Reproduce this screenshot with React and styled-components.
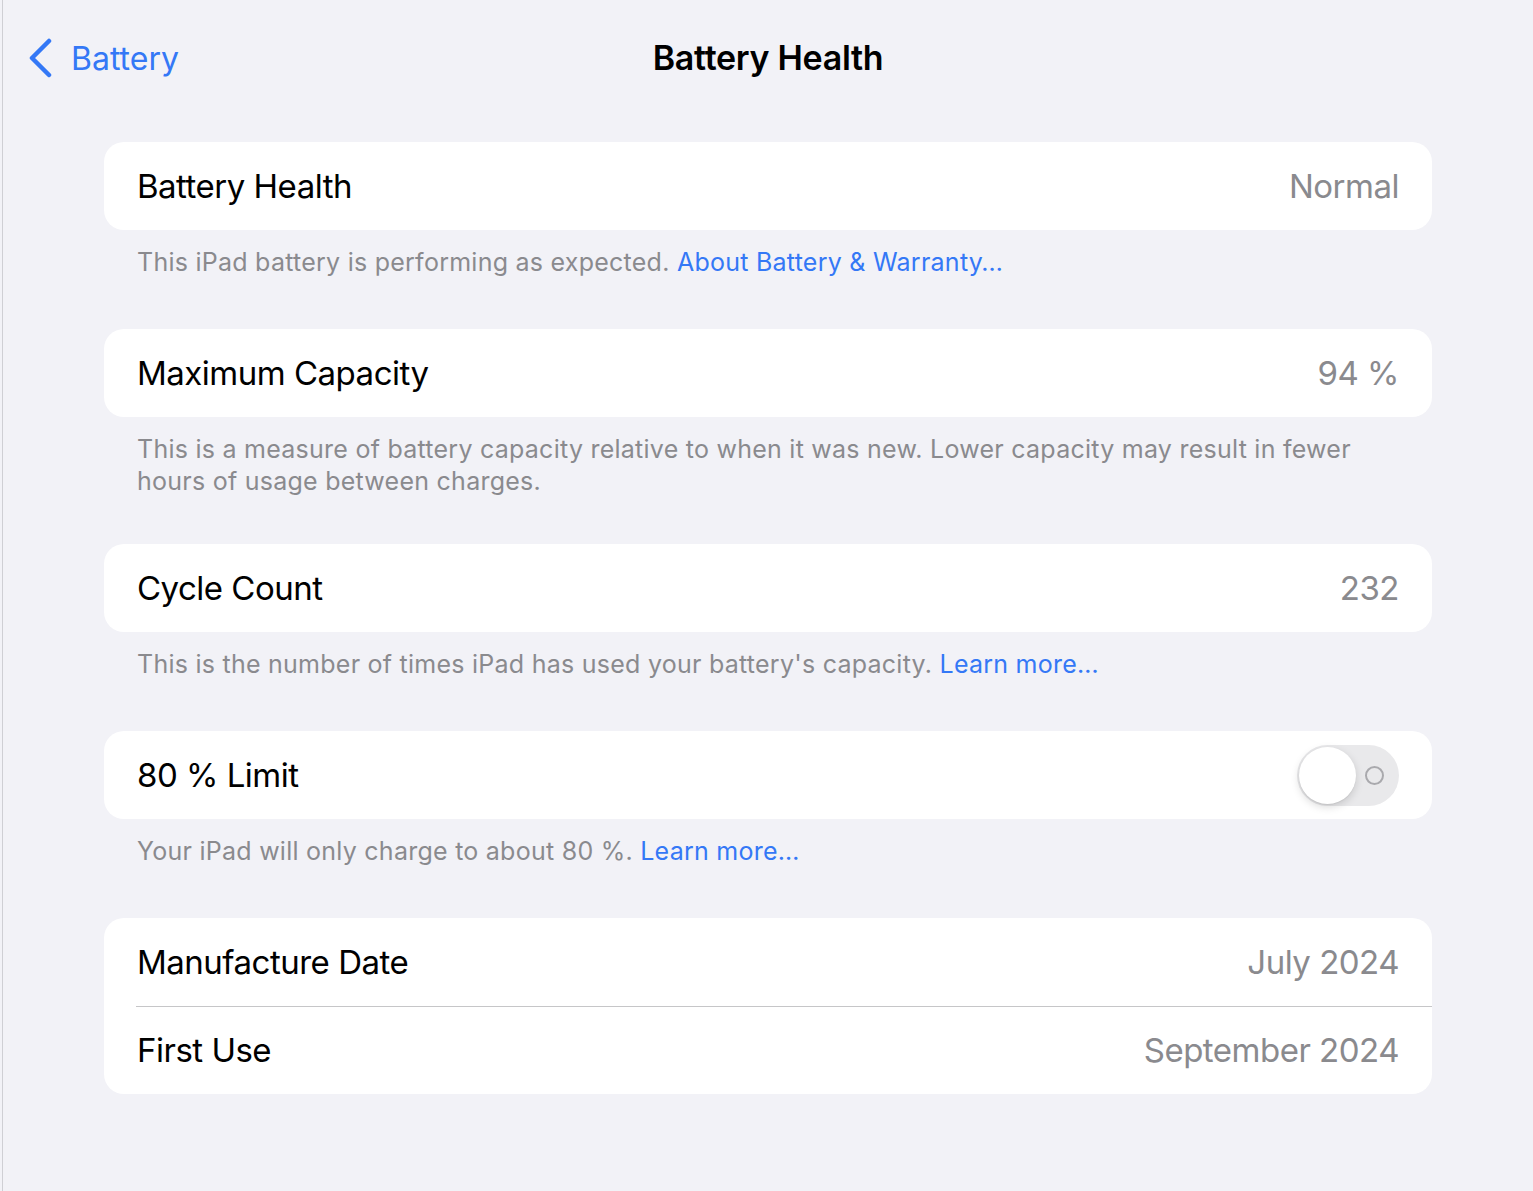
import React, { useState } from "react";
import styled, { createGlobalStyle } from "styled-components";

const GlobalStyle = createGlobalStyle`
  html, body {
    margin: 0;
    padding: 0;
    background: #f2f2f7;
  }
  body {
    font-family: Inter, "Noto Sans", "Liberation Sans", sans-serif;
    -webkit-font-smoothing: antialiased;
  }
`;

const Page = styled.div`
  min-height: 1191px;
  margin-left: 2px;
  border-left: 1px solid #cfcfd4;
  background: #f2f2f7;
  box-sizing: border-box;
`;

const NavBar = styled.div`
  position: relative;
  display: flex;
  align-items: center;
  justify-content: center;
  height: 115px;
`;

const BackButton = styled.div`
  position: absolute;
  left: 21px;
  top: 38px;
  display: flex;
  align-items: center;
  gap: 17px;
  color: #3478f6;
  font-size: 32px;
`;

const Title = styled.div`
  font-size: 34px;
  font-weight: 600;
  color: #000;
  letter-spacing: -0.3px;
`;

const Content = styled.div`
  padding: 27px 101px 0 101px;
`;

const Card = styled.div`
  background: #fff;
  border-radius: 20px;
  overflow: hidden;
`;

const Row = styled.div`
  position: relative;
  display: flex;
  align-items: center;
  justify-content: space-between;
  height: 88px;
  padding: 0 33px;
  font-size: 33px;
  letter-spacing: -0.5px;

  & + &::before {
    content: "";
    position: absolute;
    top: 0;
    left: 32px;
    right: 0;
    height: 1px;
    background: #c6c6c8;
  }
`;

const Label = styled.span`
  color: #000;
`;

const Value = styled.span`
  color: #8a8a8e;
`;

const Footer = styled.div`
  padding: 16px 60px ${(p) => (p.$tight ? "47px" : "51px")} 33px;
  font-size: 25px;
  line-height: 32px;
  color: #8a8a8e;
  letter-spacing: 0.25px;
`;

const Link = styled.span`
  color: #3478f6;
`;

const Track = styled.div`
  position: relative;
  width: 102px;
  height: 61px;
  border-radius: 31px;
  background: #e9e9eb;
  cursor: pointer;
`;

const Knob = styled.div`
  position: absolute;
  top: 2px;
  left: ${(p) => (p.$on ? "43px" : "2px")};
  width: 57px;
  height: 57px;
  border-radius: 50%;
  background: #fff;
  box-shadow: 0 3px 8px rgba(0, 0, 0, 0.15), 0 1px 1px rgba(0, 0, 0, 0.06);
`;

const OffMark = styled.div`
  position: absolute;
  top: 21px;
  right: 15px;
  width: 15px;
  height: 15px;
  border-radius: 50%;
  border: 2px solid #a9a9ad;
`;

const Chevron = () => (
  <svg width="30" height="40" viewBox="0 0 30 40">
    <path
      d="M25 3 L8 20 L25 37"
      fill="none"
      stroke="#3478f6"
      strokeWidth="4.5"
      strokeLinecap="round"
      strokeLinejoin="round"
    />
  </svg>
);

const Toggle = () => {
  const [on, setOn] = useState(false);
  return (
    <Track onClick={() => setOn(!on)}>
      {!on && <OffMark />}
      <Knob $on={on} />
    </Track>
  );
};

export default function App() {
  return (
    <Page>
      <GlobalStyle />
      <NavBar>
        <BackButton>
          <Chevron />
          Battery
        </BackButton>
        <Title>Battery Health</Title>
      </NavBar>
      <Content>
        <Card>
          <Row>
            <Label>Battery Health</Label>
            <Value>Normal</Value>
          </Row>
        </Card>
        <Footer>
          This iPad battery is performing as expected.{" "}
          <Link>About Battery &amp; Warranty…</Link>
        </Footer>

        <Card>
          <Row>
            <Label>Maximum Capacity</Label>
            <Value>94 %</Value>
          </Row>
        </Card>
        <Footer $tight>
          This is a measure of battery capacity relative to when it was new.
          Lower capacity may result in fewer hours of usage between charges.
        </Footer>

        <Card>
          <Row>
            <Label>Cycle Count</Label>
            <Value>232</Value>
          </Row>
        </Card>
        <Footer>
          This is the number of times iPad has used your battery's capacity.{" "}
          <Link>Learn more…</Link>
        </Footer>

        <Card>
          <Row>
            <Label>80 % Limit</Label>
            <Toggle />
          </Row>
        </Card>
        <Footer>
          Your iPad will only charge to about 80 %. <Link>Learn more…</Link>
        </Footer>

        <Card>
          <Row>
            <Label>Manufacture Date</Label>
            <Value>July 2024</Value>
          </Row>
          <Row>
            <Label>First Use</Label>
            <Value>September 2024</Value>
          </Row>
        </Card>
      </Content>
    </Page>
  );
}
